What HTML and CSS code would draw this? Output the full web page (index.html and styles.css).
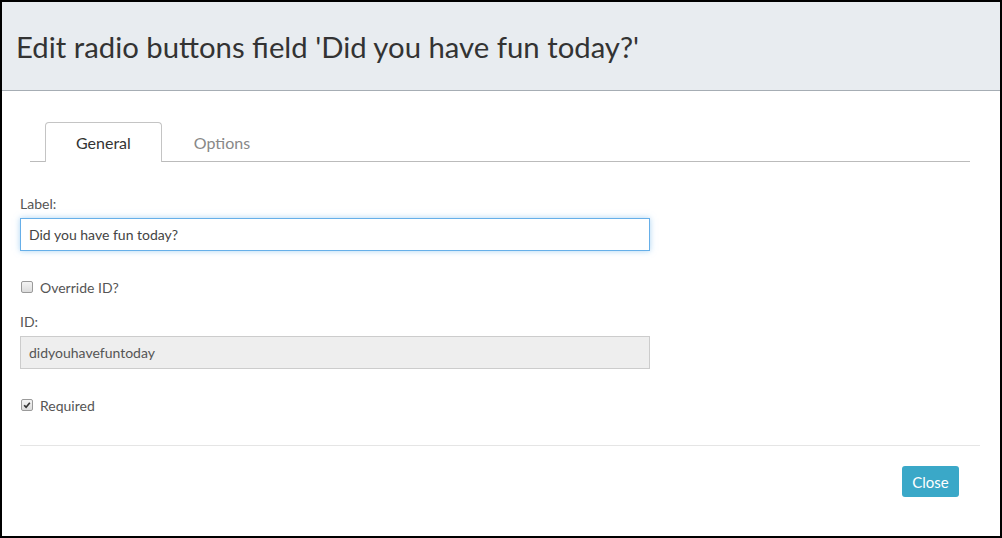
FILE: index.html
```html
<!DOCTYPE html>
<html>
<head>
<meta charset="utf-8">
<link rel="stylesheet" href="styles.css">
</head>
<body>
<div class="modal">
  <div class="modal-header">
    <h1 class="title">Edit radio buttons field 'Did you have fun today?'</h1>
  </div>
  <div class="modal-body">
    <div class="tabs">
      <div class="tab active">General</div>
      <div class="tab">Options</div>
    </div>
    <div class="field">
      <div class="label">Label:</div>
      <div class="input focus">Did you have fun today?</div>
    </div>
    <div class="check-row">
      <span class="cb"></span>
      <span class="check-label">Override ID?</span>
    </div>
    <div class="field">
      <div class="label">ID:</div>
      <div class="input readonly">didyouhavefuntoday</div>
    </div>
    <div class="check-row">
      <span class="cb checked"><svg viewBox="0 0 12 12" width="12" height="12"><path d="M2.6 6.3 L4.9 8.6 L9.4 3.2" fill="none" stroke="#333" stroke-width="2"/></svg></span>
      <span class="check-label">Required</span>
    </div>
    <div class="rule"></div>
    <div class="footer">
      <button class="btn">Close</button>
    </div>
  </div>
</div>
</body>
</html>
```

FILE: styles.css
```css
html, body {
  margin: 0;
  padding: 0;
  background: #fff;
}
body {
  font-family: Lato, "Open Sans", sans-serif;
}
.modal {
  width: 1002px;
  height: 538px;
  box-sizing: border-box;
  border: 2px solid #000;
  background: #fff;
  overflow: hidden;
}
.modal-header {
  height: 88px;
  background: #e8ecf0;
  border-bottom: 1px solid #a6adb4;
  display: flex;
  align-items: center;
  padding-left: 14px;
}
.title {
  margin: 0;
  font-weight: 400;
  font-size: 29.3px;
  color: #333;
  line-height: 1;
  position: relative;
  top: 1px;
}
.modal-body {
  padding: 31px 20px 0 18px;
}
.tabs {
  display: flex;
  margin: 0 10px 0 10px;
  padding-left: 15px;
  border-bottom: 1px solid #bbb;
  height: 39px;
}
.tab {
  box-sizing: border-box;
  height: 40px;
  padding: 0 30px 0 30px;
  display: flex;
  align-items: center;
  font-size: 16px;
  color: #888;
  border: 1px solid transparent;
  border-bottom: none;
  border-radius: 4px 4px 0 0;
}
.tab.active {
  color: #333;
  border-color: #c4c4c4;
  background: #fff;
  margin-right: 1px;
}
.field {
  margin-top: 33px;
}
.check-row + .field {
  margin-top: 17px;
}
.label {
  font-size: 14px;
  line-height: 18px;
  color: #555;
  margin-bottom: 5px;
}
.input {
  width: 630px;
  height: 33px;
  box-sizing: border-box;
  border: 1px solid #ccc;
  padding: 0 8px;
  display: flex;
  align-items: center;
  font-size: 14px;
  color: #555;
}
.input.focus {
  border-color: #66afe9;
  box-shadow: 0 0 6px rgba(102, 175, 233, 0.55);
  color: #444;
}
.input.readonly {
  background: #eee;
  color: #555;
}
.check-row {
  margin-top: 27px;
  height: 18px;
  display: flex;
  align-items: center;
  padding-left: 1px;
}
.cb {
  width: 12px;
  height: 12px;
  box-sizing: border-box;
  border: 1px solid #9a9a9a;
  border-radius: 2px;
  background: linear-gradient(#f4f4f4, #dcdcdc);
  display: inline-flex;
  align-items: center;
  justify-content: center;
  margin-right: 7px;
}
.cb svg {
  display: block;
}
.check-label {
  font-size: 14px;
  color: #555;
}
.rule {
  margin-top: 31px;
  height: 1px;
  background: #e5e5e5;
}
.footer {
  display: flex;
  justify-content: flex-end;
  padding-top: 20px;
  padding-right: 21px;
}
.btn {
  height: 31px;
  width: 57px;
  border: none;
  border-radius: 3px;
  background: #3aa8c8;
  color: #fff;
  font-family: Lato, "Open Sans", sans-serif;
  font-size: 15px;
  padding: 0;
}
```
